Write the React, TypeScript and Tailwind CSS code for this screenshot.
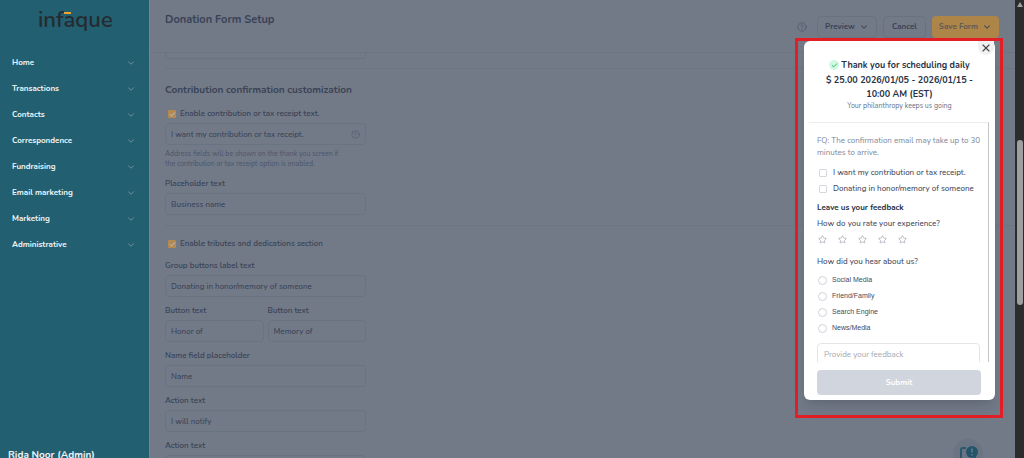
import React from "react";
import { Check, ChevronDown, CircleHelp, Star, X } from "lucide-react";

const menu = [
  "Home",
  "Transactions",
  "Contacts",
  "Correspondence",
  "Fundraising",
  "Email marketing",
  "Marketing",
  "Administrative",
];

const sources = ["Social Media", "Friend/Family", "Search Engine", "News/Media"];

function Sidebar() {
  return (
    <aside className="flex w-[149px] shrink-0 flex-col overflow-hidden bg-[#225f70] text-[#eef4f6]">
      <a href="#home" aria-label="infaque" className="relative ml-[38px] mt-1 self-start text-[22px] font-semibold leading-8 text-[#252b30]">
        infaque
        <span className="absolute left-[26px] top-2 h-[2px] w-[7px] bg-[#f0a32c]" />
      </a>
      <nav className="mt-[14px]">
        <ul>
          {menu.map((item) => (
            <li key={item}>
              <button type="button" className="flex h-[26px] w-full items-center justify-between pl-3 pr-[13px] text-[8px] font-bold leading-3">
                {item}
                <ChevronDown size={10} strokeWidth={2.2} className="text-[#7f93a4]" />
              </button>
            </li>
          ))}
        </ul>
      </nav>
      <p className="-mb-[2px] mt-auto pl-2 text-[10px] font-bold leading-[10px]">Rida Noor (Admin)</p>
    </aside>
  );
}

function Field({ id, label, value }: { id: string; label: string; value: string }) {
  return (
    <div className="flex min-w-0 flex-1 flex-col gap-[3px]">
      <label htmlFor={id} className="text-[8px] font-semibold leading-3">
        {label}
      </label>
      <TextBox id={id} value={value} />
    </div>
  );
}

function TextBox({ id, value, label }: { id: string; value: string; label?: string }) {
  return (
    <input
      id={id}
      aria-label={label}
      defaultValue={value}
      className="h-[22px] w-full shrink-0 rounded border border-[#687482] bg-transparent px-[5px] text-[8px] font-medium"
    />
  );
}

function EnableBox({ label }: { label: string }) {
  return (
    <label className="flex h-3 items-center gap-1 pl-[3px] text-[8px] font-semibold">
      <span className="relative flex size-2 items-center justify-center">
        <input type="checkbox" defaultChecked className="size-2 appearance-none rounded-[1px] bg-[#b58a51]" />
        <Check size={7} strokeWidth={3.5} className="pointer-events-none absolute text-[#b4b3b0]" />
      </span>
      {label}
    </label>
  );
}

function Header() {
  return (
    <header className="flex h-[53px] shrink-0 justify-between border-b border-[#6c7583] pl-[15px] pr-4 pt-4">
      <h1 className="h-2 text-[11px] font-bold leading-2">Donation Form Setup</h1>
      <div className="flex h-[22px] items-center gap-[6px] text-[8px] font-bold">
        <CircleHelp size={10} strokeWidth={1.8} className="mr-1 text-[#4f596a]" />
        <button type="button" className="flex h-full items-center gap-1 rounded border border-[#687280] px-[7px]">
          Preview
          <ChevronDown size={10} strokeWidth={2.5} />
        </button>
        <button type="button" className="h-full rounded border border-[#687280] px-2">
          Cancel
        </button>
        <button type="button" className="flex h-full items-center gap-1 rounded bg-[#ad8548] px-[7px] text-[#5d5a56]">
          Save Form
          <ChevronDown size={10} strokeWidth={2.5} className="text-[#3a4356]" />
        </button>
      </div>
    </header>
  );
}

function Settings() {
  return (
    <section className="flex min-h-0 flex-1 flex-col overflow-hidden pl-[15px]">
      <div className="-mt-4 flex w-[201px] shrink-0">
        <TextBox id="previous" value="" label="Previous setting" />
      </div>
      <hr className="mt-[9px] border-[#6c7583]" />
      <h2 className="mt-[13px] text-[10px] font-bold leading-4">Contribution confirmation customization</h2>
      <div className="mt-[10px] flex w-[201px] flex-col">
        <EnableBox label="Enable contribution or tax receipt text." />
        <div className="relative mt-[3px] flex">
          <TextBox id="receipt" label="Receipt text" value="I want my contribution or tax receipt." />
          <CircleHelp size={9} strokeWidth={1.8} className="absolute right-[6px] top-[7px] text-[#4f5d70]" />
        </div>
        <p className="mb-[9px] mt-1 pr-5 text-[7px] leading-[10px] text-[#4b5568]">
          Address fields will be shown on the thank you screen if the contribution or tax receipt option is enabled.
        </p>
        <Field id="placeholder" label="Placeholder text" value="Business name" />
      </div>
      <hr className="mt-[10px] border-[#6c7583]" />
      <div className="mt-3 flex w-[201px] flex-col">
        <EnableBox label="Enable tributes and dedications section" />
        <div className="mt-[10px] flex flex-col gap-2">
          <Field id="group" label="Group buttons label text" value="Donating in honor/memory of someone" />
          <div className="flex gap-1">
            <Field id="honor" label="Button text" value="Honor of" />
            <Field id="memory" label="Button text" value="Memory of" />
          </div>
          <Field id="name" label="Name field placeholder" value="Name" />
          <Field id="action" label="Action text" value="I will notify" />
          <Field id="action-2" label="Action text" value="" />
        </div>
      </div>
    </section>
  );
}

function ThankYouDialog() {
  return (
    <div role="dialog" aria-label="Thank you" className="relative flex h-[359px] flex-col rounded-md bg-white text-[8px] text-[#3f4a5e] shadow-lg">
      <button type="button" aria-label="Close" className="absolute right-px top-0 flex h-[14px] w-4 items-center justify-center rounded-b-full bg-[#f1f1f2] text-[#444]">
        <X size={12} strokeWidth={2.2} />
      </button>
      <div className="h-[81px] shrink-0 px-4 pt-[17px] text-center">
        <div className="text-[9px] font-bold leading-[14px] text-[#263145]">
          <h3 className="flex items-center justify-center gap-[2px]">
            <span className="flex size-[10px] items-center justify-center rounded-full bg-[#d3f8e2] text-[#21b566]">
              <Check size={7} strokeWidth={3} />
            </span>
            Thank you for scheduling daily
          </h3>
          <p className="mt-px">$ 25.00 2026/01/05 - 2026/01/15 - 10:00 AM (EST)</p>
        </div>
        <p className="text-[7px] leading-[10px] text-[#667085]">Your philanthropy keeps us going</p>
      </div>
      <div className="ml-[5px] mr-[6px] flex min-h-0 flex-1 flex-col overflow-hidden border-r border-t border-r-[#c4c5c8] border-t-[#ececee] pl-2 pr-2 pt-3">
        <p className="-mr-2 leading-3 text-[#7c869a]">FQ: The confirmation email may take up to 30 minutes to arrive.</p>
        <div className="mt-[6px] flex flex-col font-medium leading-4">
          {["I want my contribution or tax receipt.", "Donating in honor/memory of someone"].map((text) => (
            <label key={text} className="flex items-center gap-[6px] whitespace-nowrap pl-[2px]">
              <input type="checkbox" className="size-2 shrink-0 appearance-none rounded-[1px] border border-[#d5d8df]" />
              {text}
            </label>
          ))}
        </div>
        <h4 className="mt-[5px] font-bold leading-3 text-[#263145]">Leave us your feedback</h4>
        <p className="mt-1 font-medium leading-3">How do you rate your experience?</p>
        <div className="mt-[3px] flex gap-[10px]">
          {[1, 2, 3, 4, 5].map((n) => (
            <button key={n} type="button" aria-label={`${n} stars`} className="flex h-3 w-[10px] items-center justify-center text-[#a3a8b2]">
              <Star size={9} strokeWidth={2} />
            </button>
          ))}
        </div>
        <fieldset className="mt-[11px]">
          <legend className="pb-1 font-medium leading-3">How did you hear about us?</legend>
          {sources.map((text) => (
            <label key={text} className="flex h-4 items-center gap-[5px] pl-px font-['Liberation_Sans',sans-serif] text-[7px] text-[#3f4a5e]">
              <input type="radio" name="source" className="size-[9px] appearance-none rounded-full border border-[#cfd3db]" />
              {text}
            </label>
          ))}
        </fieldset>
        <textarea
          aria-label="Feedback"
          placeholder="Provide your feedback"
          className="mt-[7px] h-10 w-full shrink-0 resize-none rounded border border-[#e3e5e9] px-[6px] py-[5px] text-[8px] leading-3 placeholder:text-[#a5a9b0]"
        />
      </div>
      <div className="shrink-0 pb-[5px] pl-[13px] pr-[14px] pt-2">
        <button type="button" disabled className="h-[25px] w-full rounded bg-[#d0d5de] font-bold text-white">
          Submit
        </button>
      </div>
    </div>
  );
}

export default function App() {
  return (
    <div className="flex h-screen overflow-hidden bg-[#727a88] font-[Nunito,Lato,sans-serif] text-[#3a4356]">
      <Sidebar />
      <main className="relative flex min-w-0 flex-1 flex-col overflow-hidden border-l border-[#7b8390]">
        <Header />
        <Settings />
        <div className="absolute right-3 top-[38px] w-[208px] border-[3px] border-[#e31e24] pb-[15px] pl-[6px] pr-[5px]">
          <ThankYouDialog />
        </div>
        <button type="button" aria-label="Support" className="absolute -bottom-[11px] right-8 flex size-[30px] items-center justify-center rounded-full bg-[#6a7482]">
          <svg viewBox="0 0 30 30" className="size-[30px]">
            <path d="M13 9H10Q8 9 8 11V23H22V18" fill="none" stroke="#2b586c" strokeWidth="2" />
            <circle cx="19" cy="13" r="6" fill="#24546a" />
            <path d="M19 9.5v4M19 15v1.5" stroke="#6a8291" strokeWidth="1.3" />
          </svg>
        </button>
      </main>
      <div aria-hidden="true" className="flex w-[9px] shrink-0 flex-col items-center bg-[#2c2c2c]">
        <svg viewBox="0 0 8 8" className="mt-px size-2">
          <path d="M4 1L7 6H1Z" fill="#a0a0a0" />
        </svg>
        <div className="mt-[131px] h-[165px] w-[6px] rounded-full bg-[#9f9f9f]" />
      </div>
    </div>
  );
}
